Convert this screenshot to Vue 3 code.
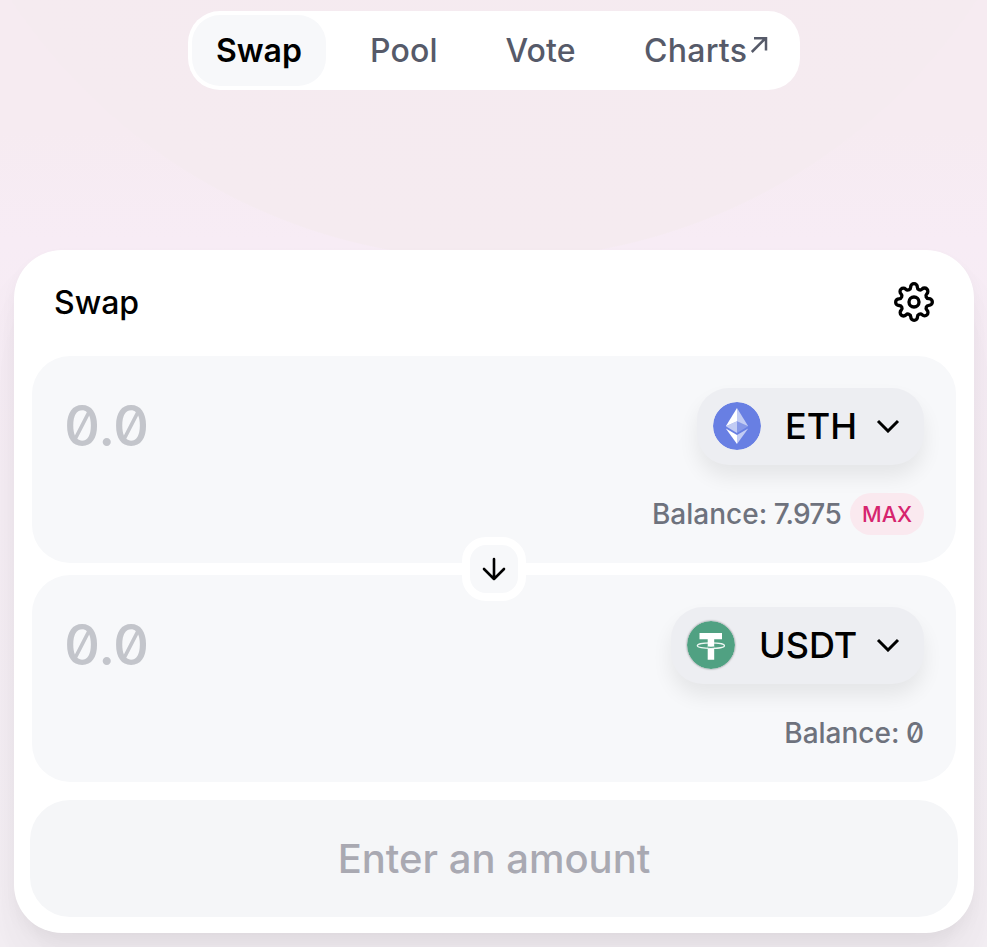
<script setup>
const tabs = [
  { label: 'Swap', cls: 'active' },
  { label: 'Pool', cls: 'pool' },
  { label: 'Vote', cls: 'vote' },
  { label: 'Charts', cls: 'charts', external: true },
]
const panels = [
  { symbol: 'ETH', balance: '7.975', max: true },
  { symbol: 'USDT', balance: '0', max: false },
]
</script>

<template>
  <div class="page">
    <nav class="tabs">
      <a v-for="tab in tabs" :key="tab.label" class="tab" :class="tab.cls">
        <span>{{ tab.label }}</span>
        <svg v-if="tab.external" class="ext" viewBox="0 0 18 18">
          <path d="M1.8 16 15.8 2M4 2.2h12v12.3" />
        </svg>
      </a>
    </nav>

    <main class="card">
      <header class="head">
        <h1>Swap</h1>
        <svg class="gear" viewBox="0 0 24 24">
          <circle cx="12" cy="12" r="3" />
          <path d="M19.4 15a1.65 1.65 0 0 0 .33 1.82l.06.06a2 2 0 0 1 0 2.83 2 2 0 0 1-2.83 0l-.06-.06a1.65 1.65 0 0 0-1.82-.33 1.65 1.65 0 0 0-1 1.51V21a2 2 0 0 1-2 2 2 2 0 0 1-2-2v-.09A1.65 1.65 0 0 0 9 19.4a1.65 1.65 0 0 0-1.82.33l-.06.06a2 2 0 0 1-2.83 0 2 2 0 0 1 0-2.83l.06-.06a1.65 1.65 0 0 0 .33-1.82 1.65 1.65 0 0 0-1.51-1H3a2 2 0 0 1-2-2 2 2 0 0 1 2-2h.09A1.65 1.65 0 0 0 4.6 9a1.65 1.65 0 0 0-.33-1.82l-.06-.06a2 2 0 0 1 0-2.83 2 2 0 0 1 2.83 0l.06.06a1.65 1.65 0 0 0 1.82.33H9a1.65 1.65 0 0 0 1-1.51V3a2 2 0 0 1 2-2 2 2 0 0 1 2 2v.09a1.65 1.65 0 0 0 1 1.51 1.65 1.65 0 0 0 1.82-.33l.06-.06a2 2 0 0 1 2.83 0 2 2 0 0 1 0 2.83l-.06.06a1.65 1.65 0 0 0-.33 1.82V9a1.65 1.65 0 0 0 1.51 1H21a2 2 0 0 1 2 2 2 2 0 0 1-2 2h-.09a1.65 1.65 0 0 0-1.51 1z" />
        </svg>
      </header>

      <div class="panels">
        <section v-for="p in panels" :key="p.symbol" class="panel">
          <div class="row">
            <span class="amount">0.0</span>
            <button class="token" :class="p.symbol.toLowerCase()">
              <svg v-if="p.symbol === 'ETH'" class="coin" viewBox="0 0 48 48">
                <circle cx="24" cy="24" r="24" fill="#687fe3" />
                <g fill="#fff">
                  <path d="M24 6v13.3l11.2 5z" fill-opacity=".6" />
                  <path d="M24 6 12.8 24.3l11.2-5z" />
                  <path d="M24 33v9l11.2-15.6z" fill-opacity=".6" />
                  <path d="M24 42v-9l-11.2-6.6z" />
                  <path d="m24 30.9 11.2-6.6-11.2-5z" fill-opacity=".2" />
                  <path d="m12.8 24.3 11.2 6.6V19.3z" fill-opacity=".6" />
                </g>
              </svg>
              <svg v-else class="coin" viewBox="0 0 48 48">
                <circle cx="24" cy="24" r="24" fill="#50a182" />
                <path d="M12.5 12H35v6.3h-7.8v20.4h-6.5V18.3h-8.2z" fill="#fff" />
                <path d="M20.7 25.6q3.2.3 6.5 0v2.2q-3.3.3-6.5 0z" fill="#50a182" />
                <ellipse cx="23.9" cy="24.7" rx="13.6" ry="2.8" fill="none" stroke="#fff" stroke-opacity=".9" stroke-width="1.2" />
              </svg>
              <span class="symbol">{{ p.symbol }}</span>
              <svg class="chev" viewBox="0 0 24 14"><path d="m2 2 10 10L22 2" /></svg>
            </button>
          </div>
          <div class="balance">
            <span class="baltext">Balance: <span :class="{ tight: p.max }">{{ p.balance }}</span></span>
            <button v-if="p.max" class="max">MAX</button>
          </div>
        </section>
        <button class="flip">
          <svg viewBox="0 0 24 24"><path d="M12 2v20M2 12l10 10 10-10" /></svg>
        </button>
      </div>

      <button class="submit">Enter an amount</button>
    </main>
  </div>
</template>

<style>
body { margin: 0; }
</style>

<style scoped>
.page {
  box-sizing: border-box;
  width: 987px;
  height: 947px;
  padding: 11px 13px 0 14px;
  overflow: hidden;
  background:
    radial-gradient(circle 580px at 494px -320px, #f5eaf0 0, #f5ebf0 99.8%, transparent 100%),
    linear-gradient(180deg, #f6ebf1 0, #f6ebf1 130px, #f7ecf5 240px, #f5edf4 500px, #f3eef3 947px);
  font-family: Inter, sans-serif;
  font-weight: 500;
  font-feature-settings: 'zero';
}
button { border: 0; margin: 0; font: inherit; font-feature-settings: inherit; }
.tabs {
  box-sizing: border-box;
  display: flex;
  width: 612px;
  height: 79px;
  margin-left: 174px;
  padding: 4px;
  border-radius: 32px;
  background: #fff;
}
.tab {
  box-sizing: border-box;
  display: flex;
  align-items: center;
  height: 71px;
  padding-left: 24px;
  border-radius: 28px;
  color: #565a69;
  font-size: 32px;
}
.tab.active { width: 134px; background: #f7f8fa; color: #000; font-weight: 600; }
.pool { width: 136px; margin-left: 20px; letter-spacing: .2px; }
.vote { width: 138px; padding-left: 23.5px; letter-spacing: .1px; }
.charts { letter-spacing: .25px; }
.ext { width: 18px; height: 18px; margin: -12px 0 0 3px; fill: none; stroke: #565a69; stroke-width: 2.5; }
.card {
  box-sizing: border-box;
  width: 960px;
  height: 683px;
  margin-top: 160px;
  padding: 0 16px 16px;
  border-radius: 48px;
  background: #fff;
  box-shadow: 0 0 2px rgba(0, 0, 0, .01), 0 8px 16px rgba(0, 0, 0, .04), 0 32px 48px rgba(0, 0, 0, .04), 0 48px 64px rgba(0, 0, 0, .01);
}
.head {
  display: flex;
  align-items: center;
  justify-content: space-between;
  height: 104px;
  padding: 0 24px;
}
h1 { margin: 0; font-size: 32px; font-weight: 500; }
.gear { width: 40px; height: 40px; fill: none; stroke: #000; stroke-width: 2; stroke-linecap: round; stroke-linejoin: round; }
.panels {
  position: relative;
  display: flex;
  flex-direction: column;
  gap: 12px;
  margin: 2px 2px 0;
}
.panel {
  box-sizing: border-box;
  height: 207px;
  padding: 32px 32px 0;
  border-radius: 38px;
  background: #f7f8fa;
}
.row { display: flex; align-items: center; justify-content: space-between; height: 77px; }
.amount { padding-bottom: 2px; color: #c3c5cb; font-size: 56px; letter-spacing: -.5px; }
.token {
  box-sizing: border-box;
  display: flex;
  align-items: center;
  height: 77px;
  padding: 0 24px 2px 16px;
  border-radius: 32px;
  background: #edeef2;
  color: #000;
  box-shadow: 0 12px 20px rgba(0, 0, 0, .075);
}
.eth { width: 227px; }
.usdt { width: 253px; }
.coin { width: 48px; height: 48px; border-radius: 50%; }
.usdt .coin { box-shadow: 0 0 2px rgba(0, 0, 0, .5); }
.symbol { margin-left: 24px; font-size: 36px; }
.chev { width: 24px; height: 14px; margin-left: auto; fill: none; stroke: #000; stroke-width: 3; }
.balance { display: flex; align-items: center; justify-content: flex-end; height: 42px; margin-top: 28px; color: #6e727d; font-size: 28px; }
.baltext { white-space: nowrap; word-spacing: -1px; }
.tight { letter-spacing: -.7px; }
.max { width: 74px; height: 42px; margin-left: 9px; padding: 0; border-radius: 21px; background: #fae9ef; color: #d6246e; font-size: 21.5px; }
.flip {
  position: absolute;
  top: 181px;
  left: 430px;
  box-sizing: border-box;
  display: grid;
  place-items: center;
  width: 64px;
  height: 64px;
  padding: 0;
  border: 8px solid #fff;
  border-radius: 24px;
  background: #f7f8fa;
}
.flip svg { width: 24px; height: 24px; fill: none; stroke: #000; stroke-width: 2.6; stroke-linecap: round; stroke-linejoin: round; }
.submit {
  display: block;
  width: 928px;
  height: 117px;
  margin-top: 18px;
  padding: 0;
  border-radius: 40px;
  background: #f5f6f8;
  color: #a9a9b2;
  font-size: 40px;
}
</style>
